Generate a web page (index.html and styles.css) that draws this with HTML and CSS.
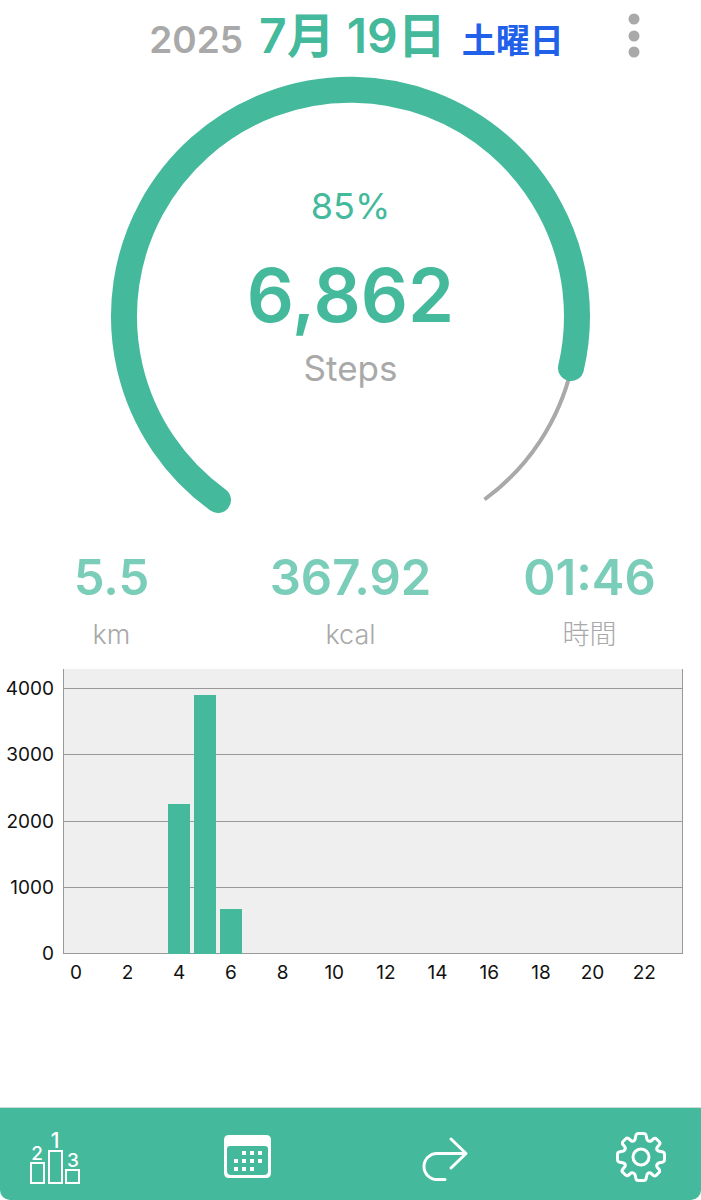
FILE: index.html
```html
<!DOCTYPE html>
<html lang="ja">
<head>
    <meta charset="UTF-8">
    <meta name="viewport" content="width=device-width, initial-scale=1.0">
    <title>歩数計</title>
    <link rel="stylesheet" href="styles.css">
</head>
<body>
    <!-- 日付 -->
    <header class="header">
        <h1 class="date">
            <span class="year">2025</span>
            <span class="day">7月 19日</span>
            <span class="weekday">土曜日</span>
        </h1>
        <button class="menu-button" type="button" aria-label="メニュー">
            <svg width="12" height="46" viewBox="0 0 12 46" fill="currentColor">
                <circle cx="6" cy="7" r="5.5"/>
                <circle cx="6" cy="24" r="5.5"/>
                <circle cx="6" cy="40" r="5.5"/>
            </svg>
        </button>
    </header>

    <main>
        <!-- 達成率リング -->
        <section class="ring">
            <svg class="ring-graph" viewBox="0 0 480 437" fill="none">
                <path class="ring-rest" d="M460.5 291A226.5 226.5 0 0 1 373.5 422.5"/>
                <path class="ring-done" d="M107 423A226.5 226.5 0 1 1 460 291"/>
            </svg>
            <div class="ring-text">
                <p class="percent">85%</p>
                <p class="steps">6,862</p>
                <p class="steps-label">Steps</p>
            </div>
        </section>

        <!-- 距離・カロリー・時間 -->
        <dl class="stats">
            <div class="stat">
                <dd>5.5</dd>
                <dt>km</dt>
            </div>
            <div class="stat">
                <dd>367.92</dd>
                <dt>kcal</dt>
            </div>
            <div class="stat">
                <dd>01:46</dd>
                <dt>時間</dt>
            </div>
        </dl>

        <!-- 時間別グラフ -->
        <section class="chart">
            <div class="y-axis">
                <span>4000</span>
                <span>3000</span>
                <span>2000</span>
                <span>1000</span>
                <span>0</span>
            </div>
            <div class="lines">
                <i></i><i></i><i></i><i></i><i></i>
            </div>
            <div class="bars">
                <div class="bar" style="grid-column: 5; height: 52.8%"></div>
                <div class="bar" style="grid-column: 6; height: 90.8%"></div>
                <div class="bar" style="grid-column: 7; height: 15.9%"></div>
            </div>
            <div class="x-axis">
                <span>0</span>
                <span>2</span>
                <span>4</span>
                <span>6</span>
                <span>8</span>
                <span>10</span>
                <span>12</span>
                <span>14</span>
                <span>16</span>
                <span>18</span>
                <span>20</span>
                <span>22</span>
            </div>
        </section>
    </main>

    <!-- 下部メニュー -->
    <nav class="tabs">
        <a href="#ranking" aria-label="ランキング">
            <svg width="52" height="52" viewBox="0 0 52 52" fill="none" stroke="currentColor" stroke-width="2">
                <rect x="2" y="32" width="13" height="20"/>
                <rect x="20" y="20" width="13" height="32"/>
                <rect x="37" y="39" width="13" height="13"/>
                <g class="rank">
                    <text x="8" y="29">2</text>
                    <text class="first" x="26" y="17">1</text>
                    <text x="44" y="36">3</text>
                </g>
            </svg>
        </a>
        <a href="#calendar" aria-label="カレンダー">
            <svg width="52" height="52" viewBox="3 -1 52 52" fill="currentColor">
                <path fill-rule="evenodd" d="M8 3H45Q50 3 50 8V41Q50 46 45 46H8Q3 46 3 41V8Q3 3 8 3ZM9 14Q6 14 6 17V39Q6 43 10 43H43Q47 43 47 39V17Q47 14 44 14Z"/>
                <path d="M21 19h4v4h-4zM29 19h4v4h-4zM37 19h4v4h-4zM13 27h4v4h-4zM21 27h4v4h-4zM29 27h4v4h-4zM37 27h4v4h-4zM13 35h4v4h-4zM21 35h4v4h-4zM29 35h4v4h-4z"/>
            </svg>
        </a>
        <a href="#share" aria-label="共有">
            <svg width="52" height="52" viewBox="0 0 52 52" fill="none" stroke="currentColor" stroke-width="3" stroke-linecap="round" stroke-linejoin="round">
                <path d="M31 8L46 22.5L31 37M46 22.5H17A13 13 0 0 0 17 48.5H25"/>
            </svg>
        </a>
        <a href="#settings" aria-label="設定">
            <svg width="52" height="52" viewBox="-26 -26 52 52" fill="none" stroke="currentColor" stroke-width="3" stroke-linejoin="round">
                <circle r="8"/>
                <path d="M-3 -23.5H3Q4.500 -23.500 5 -22L6 -17.500Q7.500 -15 10 -16L13 -18.500Q14.500 -19 15.500 -18L18.500 -15Q19.500 -14 18.500 -12.500L16 -9.500Q15 -7 17.500 -6L22 -5Q23.500 -4.500 23.500 -3V3Q23.500 4.500 22 5L17.500 6Q15 7.500 16 10L18.500 13Q19 14.500 18 15.500L15 18.500Q14 19.500 12.500 18.500L9.500 16Q7 15 6 17.500L5 22Q4.500 23.500 3 23.500H-3Q-4.500 23.500 -5 22L-6 17.500Q-7.500 15 -10 16L-13 18.500Q-14.500 19 -15.500 18L-18.500 15Q-19.500 14 -18.500 12.500L-16 9.500Q-15 7 -17.500 6L-22 5Q-23.500 4.500 -23.500 3V-3Q-23.500 -4.500 -22 -5L-17.500 -6Q-15 -7.500 -16 -10L-18.500 -13Q-19 -14.500 -18 -15.500L-15 -18.500Q-14 -19.500 -12.500 -18.500L-9.500 -16Q-7 -15 -6 -17.500L-5 -22Q-4.500 -23.500 -3 -23.500Z"/>
            </svg>
        </a>
    </nav>
</body>
</html>
```
FILE: styles.css
```css
/* 全体 */
* {
    box-sizing: border-box;
}

body {
    margin: 0;
    min-height: 100vh;
    display: flex;
    flex-direction: column;
    background: #fff;
    color: #a9a9a9;
    font-family: Inter, "Noto Sans CJK JP", sans-serif;
}

p, h1, dl, dd {
    margin: 0;
}

main {
    flex: 1;
}

/* 日付 */
.header {
    display: grid;
    grid-template-columns: 1fr auto 1fr;
    height: 77px;
    padding-left: 12px;
}

.date {
    grid-column: 2;
    display: flex;
    align-items: baseline;
    gap: 16px;
    line-height: 72px;
    font-weight: 600;
    white-space: nowrap;
}

.year {
    font-size: 37px;
}

.day {
    font-size: 48px;
    color: #44b99c;
}

.weekday {
    font-size: 34px;
    color: #2160e8;
}

.menu-button {
    align-self: start;
    justify-self: center;
    padding: 12px 10px 12px 14px;
    border: none;
    background: none;
    color: #a9a9a9;
}

svg {
    display: block;
    overflow: visible;
}

/* リング */
.ring {
    display: grid;
    justify-content: center;
}

.ring-graph,
.ring-text {
    grid-area: 1 / 1;
}

.ring-graph {
    width: 480px;
    max-width: 100%;
}

.ring-done {
    stroke: #44b99c;
    stroke-width: 26;
    stroke-linecap: round;
}

.ring-rest {
    stroke: #a9a9a9;
    stroke-width: 4;
}

.ring-text {
    padding-top: 109px;
    text-align: center;
}

.percent {
    font-size: 36px;
    line-height: 40px;
    color: #44b99c;
}

.steps {
    margin: 24px 0 8px;
    font-size: 74px;
    line-height: 90px;
    font-weight: 600;
    color: #44b99c;
}

.steps-label {
    font-size: 35px;
    line-height: 40px;
}

/* 記録 */
.stats {
    display: grid;
    grid-template-columns: repeat(3, minmax(0, 1fr));
    gap: 16px;
    margin-top: 36px;
    text-align: center;
}

.stat dd {
    font-size: 49px;
    line-height: 56px;
    font-weight: 600;
    color: #7acdb8;
}

.stat dt {
    margin-top: 11px;
    font-size: 27px;
    line-height: 36px;
    font-weight: 300;
}

/* グラフ */
.chart {
    display: grid;
    grid-template-columns: 63px 1fr;
    grid-template-rows: 285px auto;
    margin-top: 16px;
    padding-right: 18px;
    font-size: 19px;
    color: #111;
}

.y-axis,
.lines {
    display: grid;
    grid-template-rows: 20fr repeat(4, 66fr);
}

.y-axis {
    padding-right: 9px;
    text-align: right;
    line-height: 0;
}

/* 目盛りは各行の下端 */
.y-axis span {
    align-self: end;
}

.lines,
.bars {
    grid-area: 1 / 2;
}

.lines {
    border: solid #999;
    border-width: 0 1px;
    background: #efefef;
}

.lines i {
    border-bottom: 1px solid #999;
}

.bars {
    display: grid;
    grid-template-columns: repeat(24, 1fr);
    align-items: end;
}

.bar {
    margin: 0 2px;
    background: #44b99c;
}

/* 2時間ごとのラベル、左半分の列の中央 */
.x-axis {
    grid-column: 2;
    display: grid;
    grid-template-columns: repeat(12, minmax(0, 1fr));
    margin-top: 7px;
    line-height: 24px;
}

.x-axis span {
    width: 50%;
    display: flex;
    justify-content: center;
}

/* 下部メニュー */
.tabs {
    display: flex;
    justify-content: space-between;
    padding: 23px 34px 17px 29px;
    border-top: 1px solid #ccdcd8;
    border-radius: 0 0 10px 10px;
    background: #44b99c;
}

.tabs a {
    color: #fff;
}

.rank {
    fill: #fff;
    stroke: none;
    font-size: 19px;
    font-weight: 500;
    text-anchor: middle;
}

.rank .first {
    font-size: 21px;
}
```
